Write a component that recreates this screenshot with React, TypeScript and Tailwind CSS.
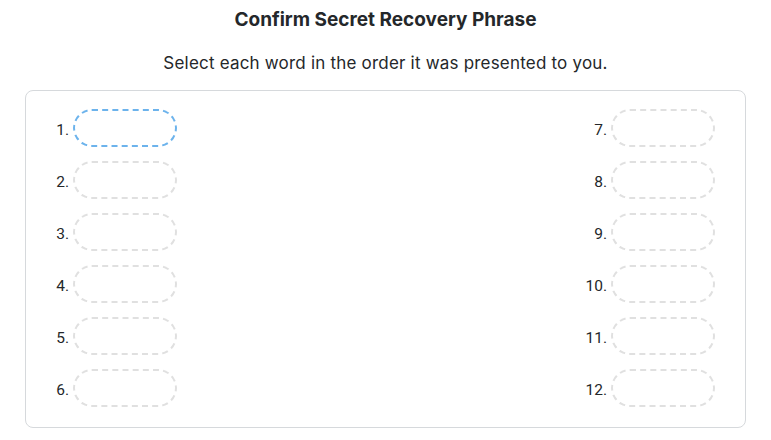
const left = [1, 2, 3, 4, 5, 6];
const right = [7, 8, 9, 10, 11, 12];

function Slot({ n, active }: { n: number; active?: boolean }) {
  return (
    <div className="flex items-center h-[38px]">
      <span className="w-[26px] pt-[5px] text-right text-[15.5px] text-[#24272a] font-['Roboto',sans-serif]">
        {n}.
      </span>
      <div
        className={
          "ml-[4px] w-[104px] h-[38px] rounded-full border-2 border-dashed bg-white " +
          (active ? "border-[#6cb3ec]" : "border-[#e0e0e0]")
        }
      />
    </div>
  );
}

export default function App() {
  return (
    <div className="w-[771px] h-[440px] bg-white overflow-hidden font-['Inter',sans-serif]">
      <h1 className="text-center text-[19px] font-bold text-[#24272a] mt-[8px] leading-[24px]">
        Confirm Secret Recovery Phrase
      </h1>
      <p className="text-center text-[17px] tracking-[0.2px] text-[#24272a] mt-[19px] leading-[24px]">
        Select each word in the order it was presented to you.
      </p>
      <div className="mx-[25px] mt-[15px] h-[338px] border border-[#d6d9dc] rounded-[8px] flex justify-between pl-[17px] pr-[30px] pt-[18px]">
        <div className="flex flex-col gap-[14px]">
          {left.map((n) => (
            <Slot key={n} n={n} active={n === 1} />
          ))}
        </div>
        <div className="flex flex-col gap-[14px]">
          {right.map((n) => (
            <Slot key={n} n={n} />
          ))}
        </div>
      </div>
    </div>
  );
}
